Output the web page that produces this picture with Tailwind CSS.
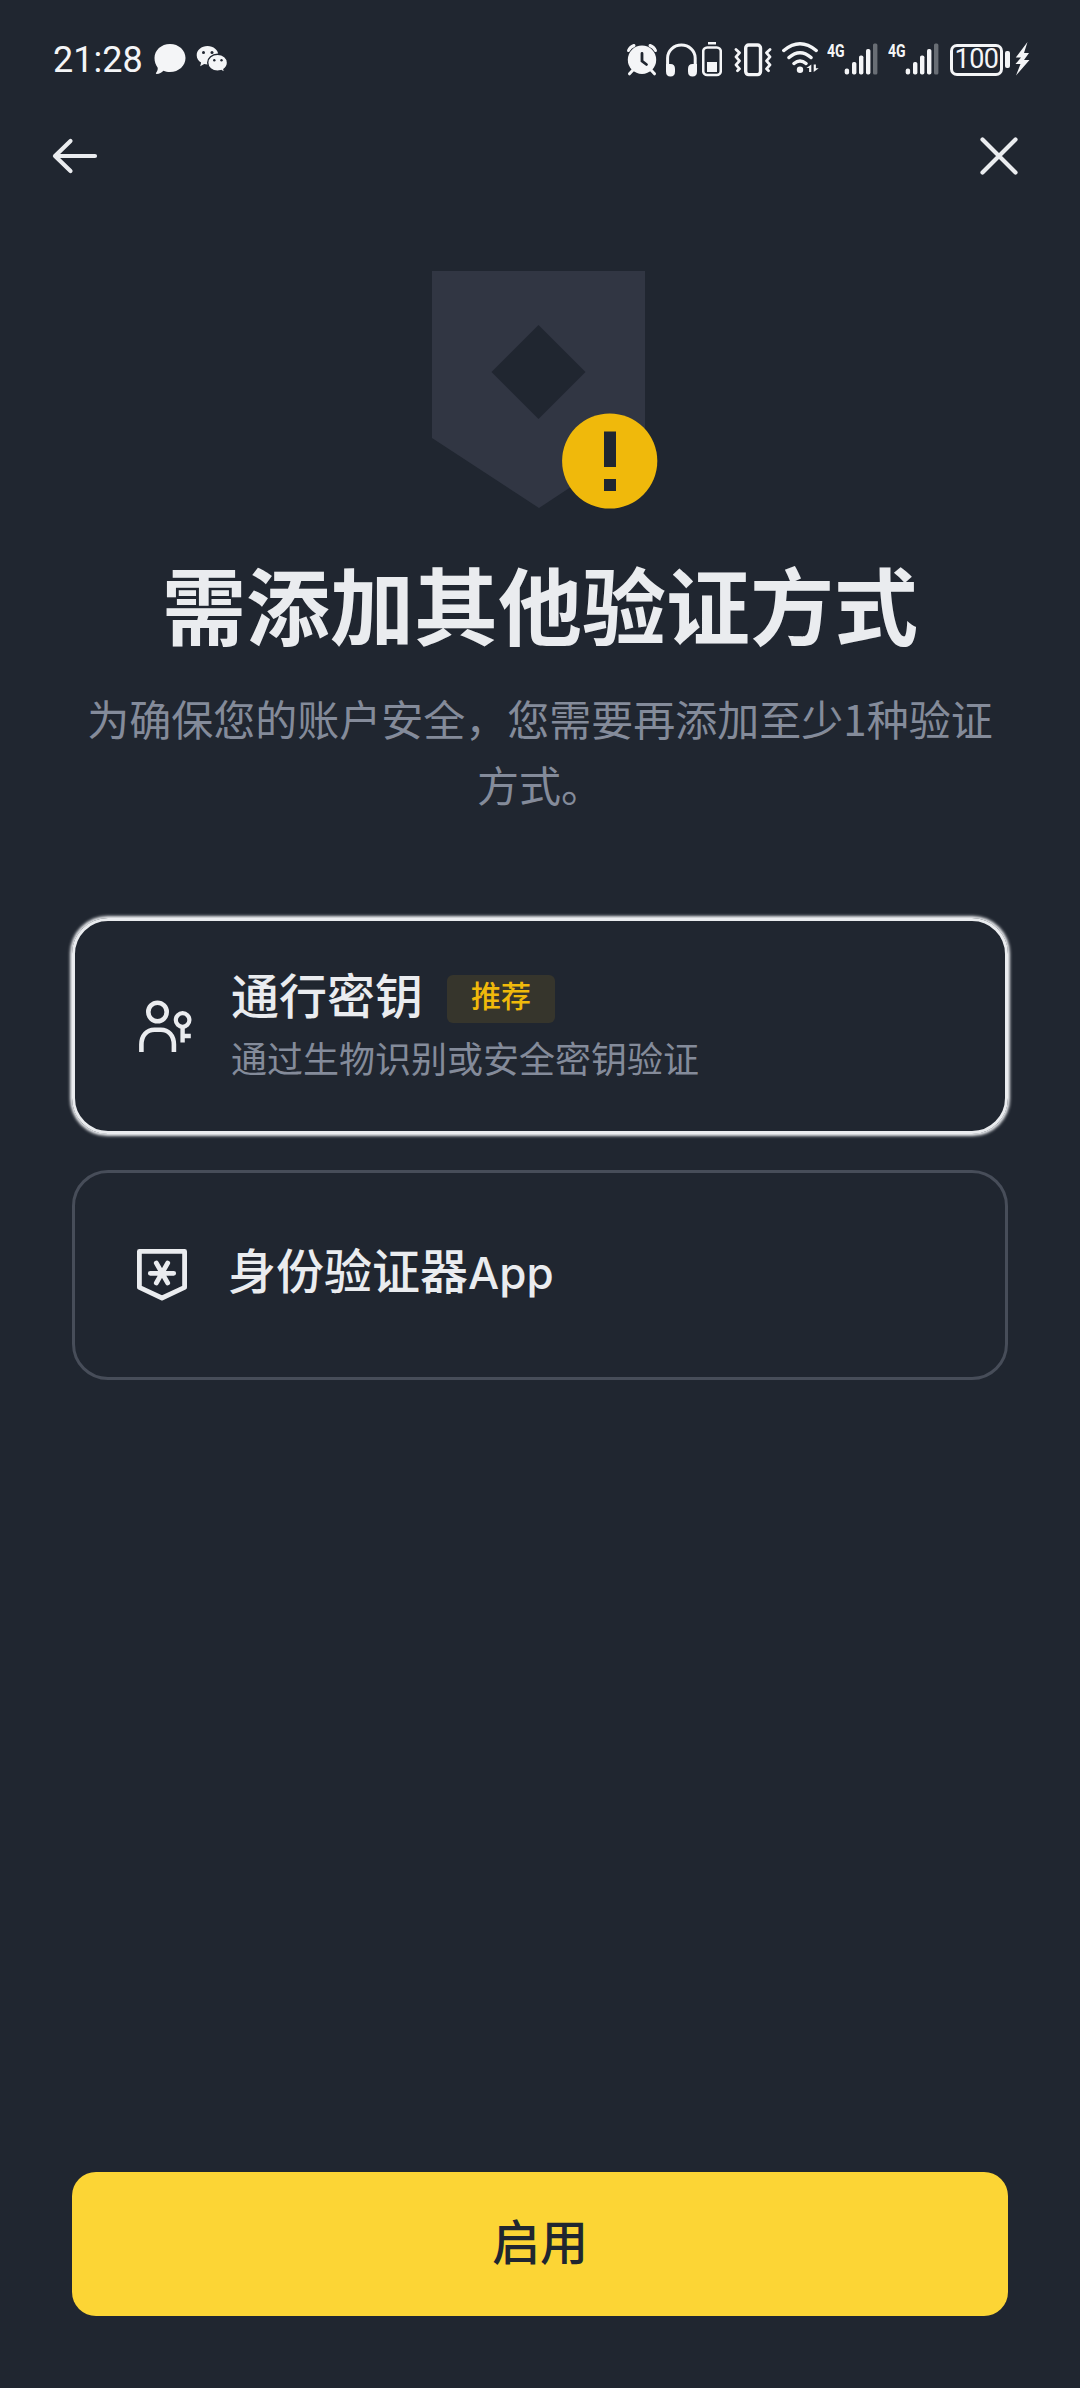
<!DOCTYPE html>
<html lang="zh-CN">
<head>
<meta charset="utf-8">
<title>需添加其他验证方式</title>
<script src="https://cdn.jsdelivr.net/npm/@tailwindcss/browser@4"></script>
</head>
<body class="bg-[#202630]">
<div class="flex flex-col w-[1080px] h-[2388px] overflow-hidden bg-[#202630] text-[#eaecef] font-['Noto_Sans_CJK_SC',sans-serif]">

  <!-- Status bar -->
  <div class="flex h-[118px] shrink-0 items-center pl-[53px] text-[#f4f5f7]">
    <span class="mt-[2px] w-[101px] font-[Roboto,sans-serif] text-[36px] leading-[40px] whitespace-nowrap">21:28</span>
    <svg class="h-[34px] w-[32px]" viewBox="154 43 32 34" fill="currentColor"><path d="M170 45c8.800 0 15.500 6.300 15.500 14s-6.700 14-15.500 14c-2.400 0-4.600-.4-6.600-1.300-1.700 1.900-4 3-6.700 3.300-.8 0-1.100-.6-.6-1.200 1.300-1.700 1.800-3.300 1.600-5.100-2-2.600-3.200-6-3.200-9.700 0-7.700 6.700-14 15.500-14z"/></svg>
    <svg class="ml-[10px] h-[34px] w-[32px]" viewBox="196 43 32 34"><path fill="currentColor" d="M207.500 47c6 0 10.800 4 10.800 9.200s-4.800 9.200-10.800 9.200c-1.200 0-2.300-.1-3.300-.4l-4 2.300.9-3.700c-2.700-1.700-4.400-4.300-4.400-7.400 0-5.200 4.800-9.200 10.800-9.200z"/><path fill="currentColor" stroke="#202630" stroke-width="1.400" d="M217.600 55.300c5.600 0 9.900 3.700 9.900 8.400 0 2.700-1.400 5-3.600 6.600l.8 3.300-3.600-2c-1.100.3-2.300.5-3.500.5-5.600 0-9.900-3.700-9.900-8.400s4.300-8.400 9.900-8.400z"/><g fill="#202630"><circle cx="203.500" cy="53.500" r="1.500"/><circle cx="212" cy="53.500" r="1.500"/><circle cx="214.300" cy="61.200" r="1.200"/><circle cx="221.500" cy="61.200" r="1.200"/></g></svg>

    <svg class="ml-[398px] h-[36px] w-[32px]" viewBox="626 41 32 36" fill="none" stroke="currentColor" stroke-linecap="round"><circle cx="642" cy="59.700" r="14.200" fill="currentColor" stroke="none"/><path stroke-width="3" d="M628.500 50.500q1.500-3.500 5.500-5M655.500 50.500q-1.500-3.500-5.500-5M633 70l-3.500 3.800M651 70l3.500 3.800"/><path stroke="#202630" stroke-width="2.800" d="M642 53.500v7.500l4.500 3.500"/></svg>
    <svg class="ml-[8px] h-[36px] w-[31px]" viewBox="666 42 31 36" fill="none" stroke="currentColor"><path stroke-width="3" d="M667.600 69v-10a13.800 13 0 0 1 27.600 0v10"/><path stroke="none" fill="currentColor" d="M666 65h4.500q4.500 0 4.500 5v2.500q0 5-4.500 5t-4.500-5zM697 65h-4.500q-4.500 0-4.500 5v2.500q0 5 4.500 5t4.500-5z"/></svg>
    <svg class="ml-[5px] h-[36px] w-[20px]" viewBox="702 42 20 36" fill="none"><rect x="703.200" y="48.500" width="17.600" height="27.500" rx="4" stroke="currentColor" stroke-width="2.600"/><path fill="currentColor" d="M708 43h8v2.600h-8zM707 63h10v10h-10z"/></svg>
    <svg class="ml-[11px] h-[36px] w-[40px]" viewBox="733 42 40 36" fill="none" stroke="currentColor" stroke-linecap="round" stroke-linejoin="round"><rect x="745.700" y="46" width="14.800" height="29.600" rx="3" stroke-width="3.400"/><path stroke-width="2.800" d="M736 50.500l3.500 3.300-3.500 4 3.500 4-3.500 4 3.500 4-2 2M770 50.500l-3.500 3.300 3.500 4-3.500 4 3.500 4-3.500 4 2 2"/></svg>
    <svg class="ml-[9px] h-[36px] w-[38px]" viewBox="782 42 38 36" fill="none" stroke="currentColor" stroke-width="3.500" stroke-linecap="round"><path d="M783.800 51.500q16.200-13.500 32.400 0M789 58.500q11-9.500 22 0M794 64.500q6-5 12 0"/><circle cx="800" cy="70.800" r="3.200" fill="currentColor" stroke="none"/><path stroke="none" fill="currentColor" d="M811.300 65.500v7.500h-2.200v-4h-2.700zM813.700 65.500v7.500l5-3.700h-2.800v-3.800z"/></svg>

    <div class="ml-[7px] flex h-[34px] w-[50px]">
      <span class="w-[17px] origin-left scale-x-[0.74] font-[Roboto,sans-serif] text-[19px] leading-[17px] font-bold whitespace-nowrap">4G</span>
      <svg class="h-[34px] w-[34px] shrink-0" viewBox="844 42 34 34" fill="currentColor"><rect x="844.700" y="68.500" width="4.400" height="6" rx="2"/><rect x="852" y="62" width="4.400" height="12.500" rx="1.800"/><rect x="859" y="55.500" width="4.400" height="19" rx="1.800"/><rect x="866" y="49" width="4.400" height="25.500" rx="1.800"/><rect x="873" y="43.500" width="4.400" height="31" rx="1.500" class="opacity-35"/></svg>
    </div>
    <div class="ml-[11px] flex h-[34px] w-[50px]">
      <span class="w-[17px] origin-left scale-x-[0.74] font-[Roboto,sans-serif] text-[19px] leading-[17px] font-bold whitespace-nowrap">4G</span>
      <svg class="h-[34px] w-[34px] shrink-0" viewBox="844 42 34 34" fill="currentColor"><rect x="844.700" y="68.500" width="4.400" height="6" rx="2"/><rect x="852" y="62" width="4.400" height="12.500" rx="1.800"/><rect x="859" y="55.500" width="4.400" height="19" rx="1.800"/><rect x="866" y="49" width="4.400" height="25.500" rx="1.800"/><rect x="873" y="43.500" width="4.400" height="31" rx="1.500" class="opacity-35"/></svg>
    </div>
    <div class="ml-[12px] mt-[1px] flex h-[32px] w-[53px] items-center justify-center rounded-[7px] border-[3px] border-current font-[Roboto,sans-serif] text-[27px] leading-none tracking-[-0.5px]">100</div>
    <div class="ml-[2px] h-[17px] w-[5px] rounded-[2px] bg-current"></div>
    <svg class="ml-[5px] h-[36px] w-[15px]" viewBox="1016 42 15 36" fill="currentColor"><path d="M1028.500 43l-11.700 15.500h5.200l-5.500 6.500h5l-4.500 11.500 13.500-15.500h-5.500l5-7h-5z"/></svg>
  </div>

  <!-- Navigation -->
  <div class="flex h-[76px] shrink-0 items-center justify-between pr-[60px] pl-[51px]">
    <svg class="h-[40px] w-[48px]" viewBox="51 136 48 40" fill="none" stroke="currentColor" stroke-width="4.200" stroke-linecap="round" stroke-linejoin="round"><path d="M95 156H55M70.500 141L55 156l15.500 15"/></svg>
    <svg class="h-[42px] w-[42px]" viewBox="978 135 42 42" fill="none" stroke="currentColor" stroke-width="4.200" stroke-linecap="round"><path d="M982.500 139.500l33 33M1015.500 139.500l-33 33"/></svg>
  </div>

  <!-- Illustration -->
  <svg class="mx-auto mt-[77px] h-[238px] w-[240px] shrink-0" viewBox="420 271 240 238">
    <path fill="#313643" fill-rule="evenodd" d="M432 271h213v167l-106 70-107-70zM538.500 325l-47 47 47 47 47-47z"/>
    <circle cx="609.700" cy="461" r="47.600" fill="#f0b90b"/>
    <path fill="#202630" d="M604 431.500h12v35.500h-12zM604 479h12v12h-12z"/>
  </svg>

  <h1 class="mt-[44px] shrink-0 text-center text-[84px] leading-[100px] font-bold">需添加其他验证方式</h1>
  <p class="mt-[32px] shrink-0 px-[72px] text-center text-[42px] leading-[66px] text-[#848b9a]">为确保您的账户安全，您需要再添加至少1种验证方式。</p>

  <!-- Verification methods -->
  <div class="mx-[72px] mt-[101px] flex shrink-0 flex-col gap-[36px]">
    <div class="flex h-[216px] items-center rounded-[36px] border-[3px] border-[#eaecef] pl-[60px] shadow-[0_0_3px_1.5px_#eaecef]">
      <svg class="h-[60px] w-[60px]" viewBox="135 996 60 60" fill="none" stroke="currentColor" stroke-width="4.600"><circle cx="157.500" cy="1012" r="9.200"/><path d="M141.400 1052v-7.500c0-9 5.500-14.800 13-14.800h6.500c7.500 0 13 5.800 13 14.800v7.500"/><circle cx="182.600" cy="1020" r="6.800" stroke-width="4.200"/><path stroke-width="4.400" d="M182.600 1027v15.500M182.600 1036h8.200"/></svg>
      <div class="mb-[8px] ml-[36px] flex flex-col gap-[9px]">
        <div class="flex items-start gap-[24px]">
          <span class="text-[48px] leading-[60px] font-medium">通行密钥</span>
          <span class="mt-[12px] h-[48px] rounded-[6px] bg-[#36352c] px-[24px] text-[30px] leading-[38px] font-medium text-[#f0b90b]">推荐</span>
        </div>
        <span class="text-[36px] leading-[50px] text-[#848b9a]">通过生物识别或安全密钥验证</span>
      </div>
    </div>
    <div class="flex h-[210px] items-center rounded-[36px] border-[3px] border-[#474d59] pl-[57px]">
      <svg class="h-[60px] w-[60px]" viewBox="132 1245 60 60" fill="none" stroke="currentColor" stroke-width="4.800" stroke-linecap="round" stroke-linejoin="round"><path d="M139.400 1251.400h45.200v36L162 1298l-22.600-10.600z"/><path d="M150.300 1273.300h23.400M156.300 1263l11.400 20M167.700 1263l-11.400 20"/></svg>
      <span class="mb-[9px] ml-[36px] text-[48px] leading-[60px] font-medium">身份验证器<span class="font-[Inter,sans-serif] text-[44px]">App</span></span>
    </div>
  </div>

  <button class="mx-[72px] mt-auto mb-[72px] h-[144px] shrink-0 rounded-[24px] bg-[#fcd535] pb-[10px] text-[48px] leading-[60px] font-medium text-[#202630]">启用</button>
</div>
</body>
</html>
